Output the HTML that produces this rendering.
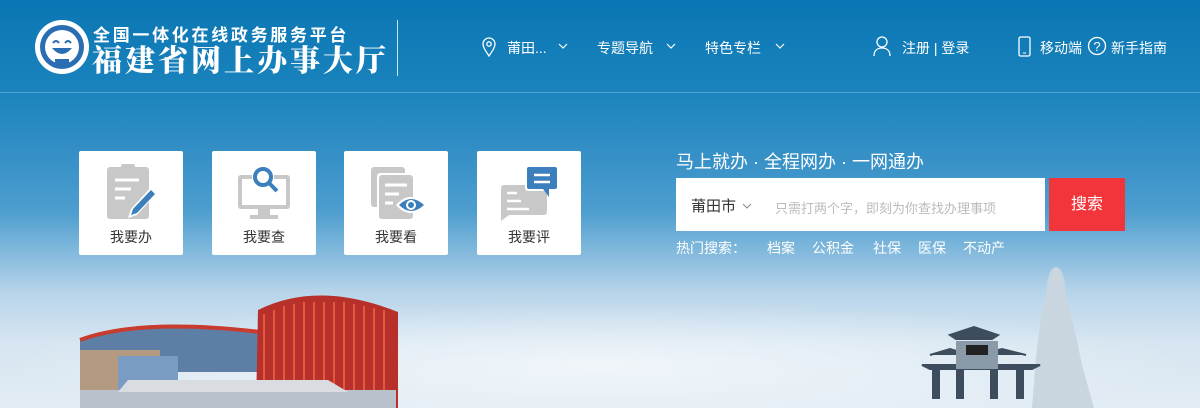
<!DOCTYPE html>
<html><head><meta charset="utf-8"><style>
*{margin:0;padding:0;box-sizing:border-box}
body{width:1200px;height:408px;overflow:hidden;font-family:"Liberation Sans","Noto Sans CJK SC",sans-serif;position:relative;
background:linear-gradient(180deg,#0a76b3 0%,#1a83bd 22%,#3590c6 38%,#4e9ecf 52%,#84badd 62%,#b9d5ea 72%,#d6e5f1 84%,#e2ecf4 100%)}
.a{position:absolute}
.hl{left:0;top:92px;width:1200px;height:1px;background:rgba(255,255,255,.25)}
.nav{color:#fff;font-size:14px}
.card{background:#fff;border-radius:2px;width:104px;height:104px;top:151px}
.card span{position:absolute;left:0;right:0;top:76px;text-align:center;font-size:14px;color:#333}
.card svg{position:absolute;left:24px;top:12px}
.hot{color:#fff;font-size:14px;top:238px}
</style></head><body>
<div class="a hl"></div>
<svg class="a" style="left:34px;top:19px" width="56" height="56" viewBox="0 0 56 56">
<circle cx="28" cy="28" r="27" fill="#fff"/><circle cx="28" cy="28" r="22" fill="#2a6db2"/><circle cx="28" cy="28" r="17" fill="#fff"/>
<path d="M19 24q3-4 6 0M31 24q3-4 6 0" stroke="#2a6db2" stroke-width="2" fill="none"/><path d="M18 29q10 12 20 0z" fill="#2a6db2"/>
<rect x="21" y="40" width="14" height="6" fill="#2a6db2"/></svg>
<div class="a" style="left:93px;top:21px;color:#fff;font-size:17px;font-weight:bold;letter-spacing:2.7px">全国一体化在线政务服务平台</div>
<div class="a" style="left:92px;top:40px;color:#fff;font-size:30px;font-weight:900;font-family:'Noto Serif CJK SC',serif;letter-spacing:3px;line-height:36px">福建省网上办事大厅</div>
<div class="a" style="left:397px;top:20px;width:1px;height:56px;background:rgba(255,255,255,.8)"></div>
<svg class="a" style="left:482px;top:37px" width="14" height="20" viewBox="0 0 14 20"><path d="M7 19C3 13 1 10 1 7a6 6 0 0 1 12 0c0 3-2 6-6 12z" fill="none" stroke="#fff" stroke-width="1.3"/><circle cx="7" cy="7" r="2.2" fill="none" stroke="#fff" stroke-width="1.3"/></svg>
<div class="a nav" style="left:507px;top:38px">莆田...</div>
<div class="a nav" style="left:597px;top:38px">专题导航</div>
<div class="a nav" style="left:705px;top:38px">特色专栏</div>
<svg class="a" style="left:558px;top:43px" width="230" height="8"><path d="M1 1l4 4 4-4M109 1l4 4 4-4M218 1l4 4 4-4" stroke="#fff" fill="none" stroke-width="1.2"/></svg>
<svg class="a" style="left:873px;top:36px" width="18" height="20" viewBox="0 0 18 20"><circle cx="9" cy="6" r="5" fill="none" stroke="#fff" stroke-width="1.3"/><path d="M1 20c0-6 4-8 8-8s8 2 8 8" fill="none" stroke="#fff" stroke-width="1.3"/></svg>
<div class="a nav" style="left:902px;top:38px">注册 | 登录</div>
<svg class="a" style="left:1018px;top:36px" width="14" height="22"><rect x="1" y="1" width="11" height="19" rx="1.5" fill="none" stroke="#fff" stroke-width="1.3"/><line x1="5" y1="17" x2="8" y2="17" stroke="#fff"/></svg>
<div class="a nav" style="left:1040px;top:38px">移动端</div>
<svg class="a" style="left:1087px;top:36px" width="20" height="20"><circle cx="10" cy="10" r="8.5" fill="none" stroke="#fff" stroke-width="1.3"/><text x="10" y="15" text-anchor="middle" fill="#fff" font-size="13" font-family="Liberation Sans">?</text></svg>
<div class="a nav" style="left:1111px;top:38px">新手指南</div>
<div class="a card" style="left:79px"><svg width="56" height="60" viewBox="0 0 56 60"><rect x="4" y="4" width="42" height="52" rx="3" fill="#c8c8c8"/><rect x="18" y="1" width="14" height="6" rx="2" fill="#c8c8c8"/><path d="M12 17h24M12 26h16M12 35h10" stroke="#fff" stroke-width="3"/><path d="M48 24l6 6-20 22-9 3 3-9z" fill="#fff"/><path d="M48 27l4 4-18 19-6 2 2-6z" fill="#3b7fbc"/></svg><span>我要办</span></div>
<div class="a card" style="left:212px"><svg width="56" height="60" viewBox="0 0 56 60"><rect x="2" y="12" width="52" height="34" rx="3" fill="#c8c8c8"/><rect x="6" y="16" width="44" height="26" fill="#fff"/><rect x="22" y="46" width="12" height="6" fill="#c8c8c8"/><rect x="14" y="52" width="28" height="4" fill="#c8c8c8"/><circle cx="27" cy="14" r="11" fill="#fff"/><circle cx="27" cy="14" r="8" fill="none" stroke="#3b7fbc" stroke-width="4"/><path d="M33 20l8 8" stroke="#3b7fbc" stroke-width="4"/></svg><span>我要查</span></div>
<div class="a card" style="left:344px"><svg width="64" height="60" viewBox="0 0 64 60"><rect x="3" y="4" width="34" height="40" rx="3" fill="#c8c8c8"/><rect x="9" y="10" width="36" height="46" rx="3" fill="#fff"/><rect x="11" y="12" width="34" height="44" rx="3" fill="#c8c8c8"/><path d="M17 22h22M17 31h14M17 40h8" stroke="#fff" stroke-width="3"/><path d="M28 42q14-16 30 0q-16 16-30 0z" fill="#fff"/><path d="M31 42q12-12 25 0q-13 12-25 0z" fill="#3b7fbc"/><circle cx="43" cy="42" r="5" fill="#fff"/><circle cx="43" cy="42" r="3" fill="#3b7fbc"/></svg><span>我要看</span></div>
<div class="a card" style="left:477px"><svg width="60" height="60" viewBox="0 0 60 60"><rect x="0" y="22" width="46" height="30" rx="3" fill="#c8c8c8"/><path d="M0 50v8l8-6z" fill="#c8c8c8"/><path d="M6 30h10M6 38h14M6 46h22" stroke="#fff" stroke-width="2.5"/><rect x="24" y="2" width="32" height="26" rx="3" fill="#fff"/><rect x="26" y="4" width="30" height="22" rx="2" fill="#3b7fbc"/><path d="M48 26v8l-6-8z" fill="#3b7fbc"/><path d="M33 12h16M33 19h16" stroke="#fff" stroke-width="2.5"/></svg><span>我要评</span></div>
<div class="a" style="left:676px;top:148px;color:#fff;font-size:18px">马上就办 · 全程网办 · 一网通办</div>
<div class="a" style="left:676px;top:178px;width:369px;height:53px;background:#fff"></div>
<div class="a" style="left:691px;top:195px;font-size:15px;color:#333">莆田市</div>
<svg class="a" style="left:742px;top:203px" width="10" height="6"><path d="M1 1l4 4 4-4" stroke="#888" fill="none"/></svg>
<div class="a" style="left:775px;top:198px;font-size:13px;color:#bbb">只需打两个字，即刻为你查找办理事项</div>
<div class="a" style="left:1049px;top:178px;width:76px;height:53px;background:#f2353b;color:#fff;font-size:16px;text-align:center;line-height:53px">搜索</div>
<div class="a hot" style="left:676px">热门搜索：</div>
<div class="a hot" style="left:767px">档案</div>
<div class="a hot" style="left:812px">公积金</div>
<div class="a hot" style="left:873px">社保</div>
<div class="a hot" style="left:918px">医保</div>
<div class="a hot" style="left:963px">不动产</div>
<div class="a" style="left:0;top:300px;width:1200px;height:108px;background:radial-gradient(ellipse at 50% 60%,rgba(255,255,255,.6),rgba(255,255,255,0) 70%)"></div>
<svg class="a" style="left:78px;top:290px" width="320" height="118" viewBox="0 0 320 118">
<path d="M2 50q60-22 180-8v40H2z" fill="#5d7fa6"/><path d="M2 50q60-22 180-8" stroke="#c83b2f" stroke-width="4" fill="none"/>
<rect x="2" y="60" width="80" height="40" fill="#b49a80"/><rect x="40" y="66" width="60" height="36" fill="#7a9bc2"/>
<path d="M180 20q60-30 140 2v96H178z" fill="#b8302a"/><path d="M186 24v90M196 20v94M206 16v98M216 14v100M226 12v102M236 12v102M246 12v102M256 12v102M266 12v102M276 14v100M286 16v98M296 18v96M306 20v94" stroke="#e05a40" stroke-width="2"/>
<path d="M2 100h316v18H2z" fill="#b9c2cc"/><path d="M50 90h200l20 12H40z" fill="#d9dde2"/></svg>
<svg class="a" style="left:920px;top:265px" width="190" height="143" viewBox="0 0 190 143">
<path d="M126 30q2-28 10-28q8 0 10 28q8 30 16 70l12 43h-62l4-50q4-40 10-63z" fill="#c9d6e0"/>
<path d="M30 70l24-8 24 8-6 4H36zM10 90l20-6 20 6M58 90l24-6 24 6M2 100h118l-8 4H10z" fill="#3e4d5e" stroke="#3e4d5e" stroke-width="2"/>
<rect x="36" y="76" width="42" height="28" fill="#8a9aa8"/><rect x="46" y="80" width="22" height="10" fill="#222"/>
<rect x="12" y="104" width="8" height="30" fill="#3e4d5e"/><rect x="36" y="104" width="8" height="30" fill="#3e4d5e"/><rect x="70" y="104" width="8" height="30" fill="#3e4d5e"/><rect x="96" y="104" width="8" height="30" fill="#3e4d5e"/></svg>
</body></html>
